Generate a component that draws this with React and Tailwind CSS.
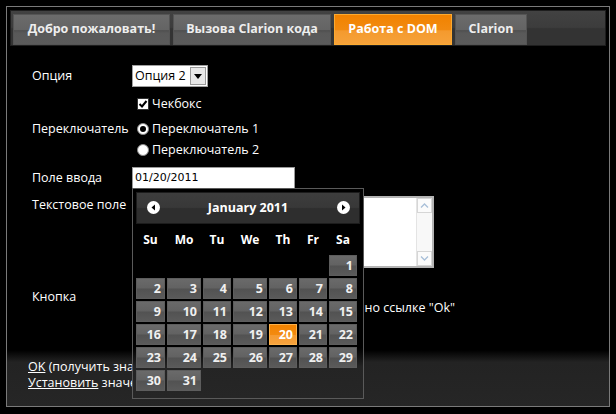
import React from 'react';

const tabs = [
    { name: 'Добро пожаловать!', w: 'w-[157px]' },
    { name: 'Вызова Clarion кода', w: 'w-[158px]' },
    { name: 'Работа с DOM', w: 'w-[118px]', active: true },
    { name: 'Clarion', w: 'w-[72px]' },
];

const weekDays = ['Su', 'Mo', 'Tu', 'We', 'Th', 'Fr', 'Sa'];

function Calendar() {
    // January 2011 starts on Saturday
    const cells = [];
    for (let i = 0; i < 6; i++) cells.push(null);
    for (let d = 1; d <= 31; d++) cells.push(d);

    return (
        <div className="absolute left-[125px] top-[181px] w-[232px] h-[211px] border border-[#5a5a5a] p-[3px] bg-[linear-gradient(to_bottom,#000_0%,#000_76%,#242424_85%,#262626_100%)]">
            {/* Header */}
            <div className="relative h-[32px] border border-[#1c1c1c] bg-[linear-gradient(to_bottom,#3d3d3d_0%,#383838_48%,#2e2e2e_52%,#2e2e2e_100%)] flex items-center justify-center">
                <span className="absolute left-[10px] top-[8px] w-[13px] h-[13px] rounded-full bg-white flex items-center justify-center">
                    <svg width="7" height="7" viewBox="0 0 7 7"><path d="M5 0.5 L1.5 3.5 L5 6.5 Z" fill="#000" /></svg>
                </span>
                <span className="text-white font-bold text-[12.5px]">January 2011</span>
                <span className="absolute right-[9px] top-[8px] w-[13px] h-[13px] rounded-full bg-white flex items-center justify-center">
                    <svg width="7" height="7" viewBox="0 0 7 7"><path d="M2 0.5 L5.5 3.5 L2 6.5 Z" fill="#000" /></svg>
                </span>
            </div>
            {/* Week days */}
            <div className="grid grid-cols-[29px_34px_28px_34px_28px_28px_28px] gap-x-[2px] h-[31px] items-center">
                {weekDays.map((d) => (
                    <span key={d} className="text-center text-white font-bold text-[12px]">{d}</span>
                ))}
            </div>
            {/* Days */}
            <div className="grid grid-cols-[29px_34px_28px_34px_28px_28px_28px] gap-[2px] auto-rows-[21px]">
                {cells.map((d, i) =>
                    d === null ? (
                        <span key={'e' + i} />
                    ) : d === 20 ? (
                        <span key={d} className="border border-[#fcb14a] bg-[linear-gradient(to_bottom,#f28300_0%,#f38a10_50%,#f59a30_52%,#f6a23e_100%)] text-white font-bold text-[12.5px] leading-[19px] text-right pr-[3px]">
                            {d}
                        </span>
                    ) : (
                        <span key={d} className="border border-[#5d5d5d] bg-[linear-gradient(to_bottom,#6a6a6a_0%,#626262_48%,#525252_52%,#5a5a5a_100%)] text-[#f0f0f0] font-bold text-[12.5px] leading-[19px] text-right pr-[3px]">
                            {d}
                        </span>
                    )
                )}
            </div>
        </div>
    );
}

export default function App() {
    return (
        <div className="w-[616px] h-[414px] bg-black p-[6px] font-['Open_Sans',sans-serif] text-[12.5px] text-white">
            <div className="relative h-[401px] border border-[#7a7a7a] p-[3px] bg-[linear-gradient(to_bottom,#000_0%,#000_86%,#232323_89%,#262626_100%)]">
                {/* Tabs */}
                <div className="h-[36px] border border-[#1e1e1e] bg-[linear-gradient(to_bottom,#424242_0%,#3c3c3c_48%,#333_52%,#333_100%)] flex items-end gap-[3px] px-[2px]">
                    {tabs.map((t) =>
                        t.active ? (
                            <div key={t.name} className={`${t.w} h-[31px] border border-[#fcaa30] bg-[linear-gradient(to_bottom,#f18200_0%,#f28a10_50%,#f49a2e_55%,#f6a23a_100%)] flex items-center justify-center font-bold text-white`}>
                                {t.name}
                            </div>
                        ) : (
                            <div key={t.name} className={`${t.w} h-[31px] border border-[#555] bg-[linear-gradient(to_bottom,#6b6b6b_0%,#646464_50%,#4f4f4f_54%,#595959_62%,#5b5b5b_100%)] flex items-center justify-center font-bold text-[#eeeeee]`}>
                                {t.name}
                            </div>
                        )
                    )}
                </div>

                {/* Form */}
                <div className="pl-[22px] pt-[19px]">
                    <div className="flex items-center h-[22px]">
                        <span className="w-[100px]">Опция</span>
                        <div className="w-[76px] h-[22px] bg-white border border-[#a0a0a0] flex items-center justify-between pl-[2px] pr-[1px]">
                            <span className="text-black">Опция 2</span>
                            <span className="w-[16px] h-[18px] bg-[#e8e8e8] border border-[#9a9a9a] flex items-center justify-center">
                                <svg width="8" height="5" viewBox="0 0 8 5"><path d="M0 0 H8 L4 5 Z" fill="#000" /></svg>
                            </span>
                        </div>
                    </div>

                    <div className="flex items-center h-[16px] mt-[9px] pl-[105px]">
                        <span className="w-[12px] h-[12px] bg-white border border-[#333] flex items-center justify-center">
                            <svg width="10" height="10" viewBox="0 0 10 10"><path d="M1.5 5 L4 7.5 L8.5 2" stroke="#000" strokeWidth="2" fill="none" /></svg>
                        </span>
                        <span className="ml-[3px]">Чекбокс</span>
                    </div>

                    <div className="flex items-center h-[16px] mt-[9px]">
                        <span className="w-[105px]">Переключатель</span>
                        <span className="w-[12px] h-[12px] rounded-full bg-white border border-[#888] flex items-center justify-center">
                            <span className="w-[6px] h-[6px] rounded-full bg-black" />
                        </span>
                        <span className="ml-[3px]">Переключатель 1</span>
                    </div>

                    <div className="flex items-center h-[16px] mt-[5px] pl-[105px]">
                        <span className="w-[12px] h-[12px] rounded-full bg-white border border-[#888]" />
                        <span className="ml-[3px]">Переключатель 2</span>
                    </div>

                    <div className="flex items-center h-[22px] mt-[9px]">
                        <span className="w-[100px]">Поле ввода</span>
                        <div className="w-[163px] h-[22px] bg-white border border-[#9a9a9a] flex items-center pl-[2px]">
                            <span className="text-black text-[11px] font-['DejaVu_Sans',sans-serif]">01/20/2011</span>
                        </div>
                    </div>

                    <div className="flex items-start mt-[7px]">
                        <span className="w-[100px] leading-[16px] pt-[1px]">Текстовое поле</span>
                        <div className="w-[302px] h-[72px] bg-white border-2 border-[#b4b4b4] flex justify-end">
                            <div className="w-[16px] h-full bg-[#f8f8f8] border-l border-[#e4e4e4] flex flex-col justify-between">
                                <span className="h-[15px] border border-[#d6d6d6] bg-[#fbfbfb] flex items-center justify-center">
                                    <svg width="9" height="5" viewBox="0 0 9 5"><path d="M1 4.5 L4.5 1 L8 4.5" stroke="#a8bfd8" strokeWidth="1.3" fill="none" /></svg>
                                </span>
                                <span className="h-[15px] border border-[#d6d6d6] bg-[#fbfbfb] flex items-center justify-center">
                                    <svg width="9" height="5" viewBox="0 0 9 5"><path d="M1 0.5 L4.5 4 L8 0.5" stroke="#a8bfd8" strokeWidth="1.3" fill="none" /></svg>
                                </span>
                            </div>
                        </div>
                    </div>

                    <div className="flex items-start mt-[21px]">
                        <span className="w-[100px] leading-[16px]">Кнопка</span>
                        <div className="flex flex-col w-[323px]">
                            <span className="h-[11px]" />
                            <span className="leading-[16px] text-right whitespace-nowrap">аналогично ссылке "Ok"</span>
                        </div>
                    </div>
                </div>

                <div className="absolute left-[21px] top-[352px] leading-[16px] whitespace-nowrap">
                    <div><span className="underline">OK</span> (получить значения)</div>
                    <div><span className="underline">Установить</span> значения</div>
                </div>

                <Calendar />
            </div>
        </div>
    );
}
